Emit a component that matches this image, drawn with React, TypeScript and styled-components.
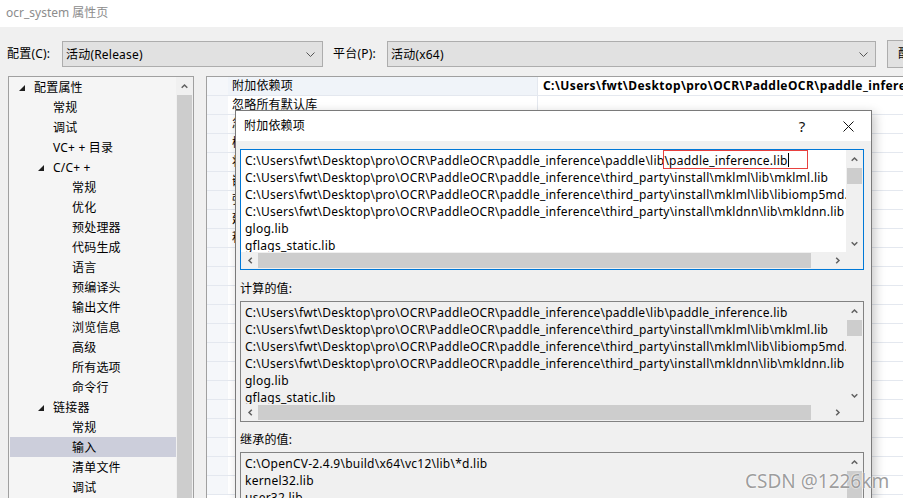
import React from 'react';
import styled, { createGlobalStyle } from 'styled-components';

const GlobalStyle = createGlobalStyle`
  html, body { margin: 0; padding: 0; background: #f0f0f0; }
  body {
    width: 903px; height: 498px; overflow: hidden;
    font-family: "Noto Sans", "Noto Sans CJK SC", sans-serif;
    font-size: 12px; color: #000;
    letter-spacing: 0.2px;
  }
`;

const Window = styled.div`
  position: relative;
  width: 903px;
  height: 498px;
  overflow: hidden;
  background: #f0f0f0;
  display: flex;
  flex-direction: column;
`;

const TitleBar = styled.div`
  height: 27px;
  flex: none;
  background: #fff;
  color: #8c8c8c;
  display: flex;
  align-items: center;
  padding: 0 0 3px 6px;
  box-sizing: border-box;
  letter-spacing: 0;
`;

const ConfigRow = styled.div`
  height: 49px;
  flex: none;
  box-sizing: border-box;
  padding: 14px 0 0 7px;
  display: flex;
  align-items: flex-start;
  white-space: nowrap;
`;

const FieldLabel = styled.div<{ $w: number }>`
  width: ${p => p.$w}px;
  height: 26px;
  line-height: 26px;
  flex: none;
`;

const Combo = styled.div<{ $w: number; $gap: number }>`
  width: ${p => p.$w}px;
  height: 26px;
  flex: none;
  box-sizing: border-box;
  border: 1px solid #adadad;
  background: #e1e1e1;
  margin-right: ${p => p.$gap}px;
  display: flex;
  align-items: center;
  justify-content: space-between;
  padding: 0 7px 0 3px;
`;

const PushButton = styled.div`
  height: 28px;
  margin-top: -1px;
  flex: none;
  box-sizing: border-box;
  border: 1px solid #adadad;
  background: #e1e1e1;
  padding: 0 10px;
  line-height: 26px;
`;

const Content = styled.div`
  flex: 1;
  display: flex;
  align-items: flex-start;
  padding-left: 8px;
  gap: 12px;
  min-height: 0;
`;

const TreePanel = styled.div`
  width: 186px;
  height: 440px;
  flex: none;
  box-sizing: border-box;
  border: 1px solid #a0a0a0;
  background: #f5f5f5;
  display: flex;
`;

const TreeList = styled.div`
  flex: 1;
  display: flex;
  flex-direction: column;
  padding-left: 1px;
`;

const TreeRow = styled.div<{ $level: number; $selected?: boolean }>`
  height: 20px;
  flex: none;
  display: flex;
  align-items: center;
  padding-left: ${p => 9 + p.$level * 19}px;
  background: ${p => (p.$selected ? '#cccedb' : 'transparent')};
  white-space: nowrap;
`;

const Expander = styled.div`
  width: 15px;
  height: 20px;
  flex: none;
  display: flex;
  align-items: center;
  padding-top: 1px;
  box-sizing: border-box;
`;

const VScroll = styled.div`
  width: 17px;
  flex: none;
  display: flex;
  flex-direction: column;
  background: #f0f0f0;
`;

const HScroll = styled.div`
  height: 17px;
  display: flex;
  background: #f0f0f0;
`;

const ArrowBtn = styled.div`
  width: 17px;
  height: 17px;
  flex: none;
  display: flex;
  align-items: center;
  justify-content: center;
`;

const Track = styled.div<{ $vertical?: boolean }>`
  flex: 1;
  display: flex;
  flex-direction: ${p => (p.$vertical ? 'column' : 'row')};
  min-width: 0;
  min-height: 0;
`;

const VThumb = styled.div<{ $h?: number }>`
  background: #cdcdcd;
  margin: 1px 1px 0 1px;
  ${p => (p.$h ? `height: ${p.$h}px; flex: none;` : 'flex: 1;')}
`;

const HThumb = styled.div<{ $w: number }>`
  background: #cdcdcd;
  width: ${p => p.$w}px;
  flex: none;
  margin: 1px 0;
`;

const Corner = styled.div`
  background: #f0f0f0;
`;

const PropPanel = styled.div`
  width: 720px;
  height: 440px;
  flex: none;
  box-sizing: border-box;
  border-left: 1px solid #a0a0a0;
  border-top: 1px solid #a0a0a0;
  background: #fff;
  display: flex;
  flex-direction: column;
`;

const PropRow = styled.div`
  height: 19px;
  flex: none;
  box-sizing: border-box;
  display: grid;
  grid-template-columns: 21px 310px 1fr;
  border-bottom: 1px solid #e4e8ef;
  white-space: nowrap;
  line-height: 18px;
`;

const Gutter = styled.div`
  background: #f5f7fa;
`;

const PropName = styled.div<{ $selected?: boolean }>`
  padding-left: 4px;
  background: ${p => (p.$selected ? '#f0f4f9' : '#fff')};
  border-right: 1px solid #e4e8ef;
  overflow: hidden;
`;

const PropValue = styled.div<{ $bold?: boolean }>`
  padding-left: 5px;
  font-weight: ${p => (p.$bold ? 700 : 400)};
  letter-spacing: ${p => (p.$bold ? '0.42px' : '0.2px')};
  overflow: hidden;
`;

const Dialog = styled.div`
  position: absolute;
  left: 235px;
  top: 110px;
  width: 637px;
  height: 420px;
  box-sizing: border-box;
  border: 1px solid #7a7a7a;
  background: #f0f0f0;
  box-shadow: 3px 3px 10px rgba(0, 0, 0, 0.22);
  display: flex;
  flex-direction: column;
`;

const DialogTitle = styled.div`
  height: 30px;
  flex: none;
  background: #fff;
  display: flex;
  align-items: center;
  padding-left: 8px;
`;

const TitleText = styled.div`
  flex: 1;
  padding-bottom: 2px;
`;

const TitleBtn = styled.div`
  width: 46px;
  height: 30px;
  display: flex;
  align-items: center;
  justify-content: center;
  font-size: 15px;
  color: #111;
`;

const DialogBody = styled.div`
  flex: 1;
  display: flex;
  flex-direction: column;
  padding: 8px 7px 0 4px;
`;

const ListBox = styled.div<{ $active?: boolean }>`
  height: 121px;
  flex: none;
  box-sizing: border-box;
  border: 1px solid ${p => (p.$active ? '#0078d7' : '#828282')};
  background: ${p => (p.$active ? '#fff' : '#f0f0f0')};
  display: grid;
  grid-template-columns: 1fr 17px;
  grid-template-rows: 1fr 17px;
`;

const ListText = styled.div`
  padding: 2px 0 0 4px;
  overflow: hidden;
  white-space: nowrap;
  line-height: 17px;
  min-width: 0;
  letter-spacing: 0.24px;
`;

const Line = styled.div`
  height: 17px;
`;

const Marked = styled.span`
  position: relative;
  &::after {
    content: '';
    position: absolute;
    left: -1px;
    top: -2px;
    right: -20px;
    height: 19px;
    border: 1px solid #e8413f;
    box-sizing: border-box;
  }
`;

const Caret = styled.span`
  display: inline-block;
  width: 1px;
  height: 14px;
  background: #000;
  vertical-align: -2px;
`;

const SectionLabel = styled.div<{ $top: number }>`
  height: 17px;
  line-height: 17px;
  margin: ${p => p.$top}px 0 4px 0;
`;

const Watermark = styled.div`
  position: absolute;
  left: 745px;
  top: 468px;
  font-family: "Noto Sans", sans-serif;
  font-size: 19px;
  letter-spacing: 0;
  color: rgba(140, 140, 140, 0.85);
  text-shadow: 0 0 2px #fff, 0 0 1px #fff;
  white-space: nowrap;
`;

type Dir = 'up' | 'down' | 'left' | 'right';

const Chevron = ({ dir }: { dir: Dir }) => {
  const vertical = dir === 'up' || dir === 'down';
  const d: Record<Dir, string> = {
    up: 'M0.7 4.8 L3.5 2 L6.3 4.8',
    down: 'M0.7 1.2 L3.5 4 L6.3 1.2',
    left: 'M4.8 0.7 L2 3.5 L4.8 6.3',
    right: 'M1.2 0.7 L4 3.5 L1.2 6.3',
  };
  return (
    <svg width={vertical ? 7 : 6} height={vertical ? 6 : 7} viewBox={vertical ? '0 0 7 6' : '0 0 6 7'}>
      <path d={d[dir]} fill="none" stroke="#606060" strokeWidth="1.5" />
    </svg>
  );
};

const ComboArrow = () => (
  <svg width="9" height="5" viewBox="0 0 9 5">
    <path d="M0.5 0.5 L4.5 4.5 L8.5 0.5" fill="none" stroke="#555" strokeWidth="1" />
  </svg>
);

const ExpandedGlyph = () => (
  <svg width="6" height="6" viewBox="0 0 6 6">
    <polygon points="6,0 6,6 0,6" fill="#1e1e1e" />
  </svg>
);

const CloseIcon = () => (
  <svg width="11" height="11" viewBox="0 0 11 11">
    <path d="M0.5 0.5 L10.5 10.5 M10.5 0.5 L0.5 10.5" stroke="#111" strokeWidth="1" />
  </svg>
);

const treeItems: { label: string; level: number; expanded?: boolean; selected?: boolean }[] = [
  { label: '配置属性', level: 0, expanded: true },
  { label: '常规', level: 1 },
  { label: '调试', level: 1 },
  { label: 'VC+ + 目录', level: 1 },
  { label: 'C/C+ +', level: 1, expanded: true },
  { label: '常规', level: 2 },
  { label: '优化', level: 2 },
  { label: '预处理器', level: 2 },
  { label: '代码生成', level: 2 },
  { label: '语言', level: 2 },
  { label: '预编译头', level: 2 },
  { label: '输出文件', level: 2 },
  { label: '浏览信息', level: 2 },
  { label: '高级', level: 2 },
  { label: '所有选项', level: 2 },
  { label: '命令行', level: 2 },
  { label: '链接器', level: 1, expanded: true },
  { label: '常规', level: 2 },
  { label: '输入', level: 2, selected: true },
  { label: '清单文件', level: 2 },
  { label: '调试', level: 2 },
  { label: '系统', level: 2 },
];

const props = [
  { name: '附加依赖项', value: 'C:\\Users\\fwt\\Desktop\\pro\\OCR\\PaddleOCR\\paddle_inference\\paddle\\lib\\paddle_inference.lib', bold: true },
  { name: '忽略所有默认库', value: '' },
  { name: '忽略特定默认库', value: '' },
  { name: '模块定义文件', value: '' },
  { name: '将模块添加到程序集', value: '' },
  { name: '嵌入托管资源文件', value: '' },
  { name: '强制符号引用', value: '' },
  { name: '延迟加载的 DLL', value: '' },
  { name: '程序集链接资源', value: '' },
  ...Array.from({ length: 13 }, () => ({ name: '', value: '' })),
];

const base = 'C:\\Users\\fwt\\Desktop\\pro\\OCR\\PaddleOCR\\paddle_inference';
const libLines = [
  `${base}\\paddle\\lib\\paddle_inference.lib`,
  `${base}\\third_party\\install\\mklml\\lib\\mklml.lib`,
  `${base}\\third_party\\install\\mklml\\lib\\libiomp5md.lib`,
  `${base}\\third_party\\install\\mkldnn\\lib\\mkldnn.lib`,
  'glog.lib',
  'gflags_static.lib',
  'libprotobuf.lib',
];

const inherited = [
  'C:\\OpenCV-2.4.9\\build\\x64\\vc12\\lib\\*d.lib',
  'kernel32.lib',
  'user32.lib',
  'gdi32.lib',
  'winspool.lib',
  'comdlg32.lib',
];

const VerticalBar = ({ thumb, showDown = true }: { thumb?: number; showDown?: boolean }) => (
  <VScroll>
    <ArrowBtn><Chevron dir="up" /></ArrowBtn>
    <Track $vertical>
      <VThumb $h={thumb} />
    </Track>
    {showDown && <ArrowBtn><Chevron dir="down" /></ArrowBtn>}
  </VScroll>
);

const HorizontalBar = () => (
  <HScroll>
    <ArrowBtn><Chevron dir="left" /></ArrowBtn>
    <Track>
      <HThumb $w={553} />
    </Track>
    <ArrowBtn><Chevron dir="right" /></ArrowBtn>
  </HScroll>
);

export default function App() {
  return (
    <Window>
      <GlobalStyle />
      <TitleBar>ocr_system 属性页</TitleBar>
      <ConfigRow>
        <FieldLabel $w={55}>配置(C):</FieldLabel>
        <Combo $w={261} $gap={10}>
          <span>活动(Release)</span>
          <ComboArrow />
        </Combo>
        <FieldLabel $w={54}>平台(P):</FieldLabel>
        <Combo $w={489} $gap={11}>
          <span>活动(x64)</span>
          <ComboArrow />
        </Combo>
        <PushButton>配置管理器(O)...</PushButton>
      </ConfigRow>
      <Content>
        <TreePanel>
          <TreeList>
            {treeItems.map((t, i) => (
              <TreeRow key={i} $level={t.level} $selected={t.selected}>
                <Expander>{t.expanded && <ExpandedGlyph />}</Expander>
                {t.label}
              </TreeRow>
            ))}
          </TreeList>
          <VerticalBar showDown={false} />
        </TreePanel>
        <PropPanel>
          {props.map((p, i) => (
            <PropRow key={i}>
              <Gutter />
              <PropName $selected={i === 0}>{p.name}</PropName>
              <PropValue $bold={p.bold}>{p.value}</PropValue>
            </PropRow>
          ))}
        </PropPanel>
      </Content>

      <Dialog>
        <DialogTitle>
          <TitleText>附加依赖项</TitleText>
          <TitleBtn>?</TitleBtn>
          <TitleBtn><CloseIcon /></TitleBtn>
        </DialogTitle>
        <DialogBody>
          <ListBox $active>
            <ListText>
              <Line>
                {`${base}\\paddle\\lib`}
                <Marked>\paddle_inference.lib</Marked>
                <Caret />
              </Line>
              {libLines.slice(1).map((l, i) => (
                <Line key={i}>{l}</Line>
              ))}
            </ListText>
            <VerticalBar thumb={16} />
            <HorizontalBar />
            <Corner />
          </ListBox>
          <SectionLabel $top={10}>计算的值:</SectionLabel>
          <ListBox>
            <ListText>
              {libLines.map((l, i) => (
                <Line key={i}>{l}</Line>
              ))}
            </ListText>
            <VerticalBar thumb={16} />
            <HorizontalBar />
            <Corner />
          </ListBox>
          <SectionLabel $top={9}>继承的值:</SectionLabel>
          <ListBox>
            <ListText>
              {inherited.map((l, i) => (
                <Line key={i}>{l}</Line>
              ))}
            </ListText>
            <VerticalBar />
            <HorizontalBar />
            <Corner />
          </ListBox>
        </DialogBody>
      </Dialog>
      <Watermark>CSDN @1226km</Watermark>
    </Window>
  );
}
